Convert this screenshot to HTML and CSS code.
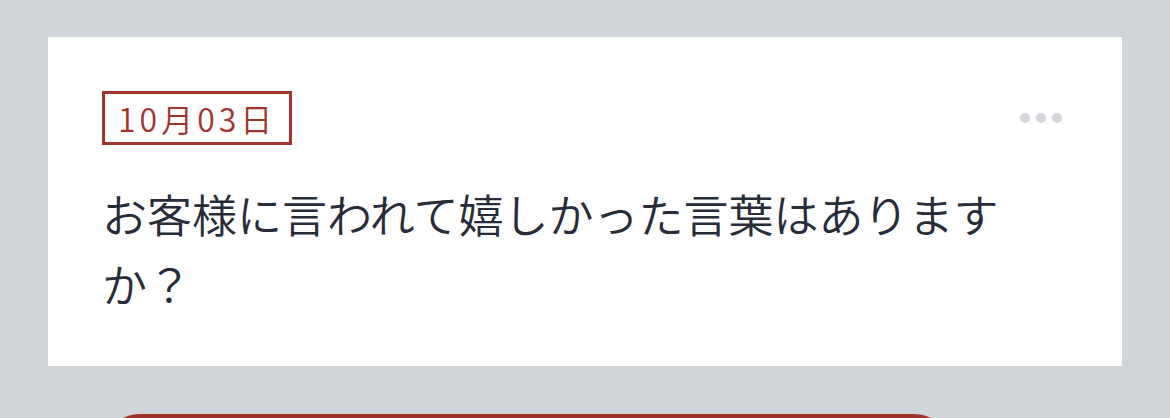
FILE: index.html
```html
<!DOCTYPE html>
<html lang="ja">
<head>
    <meta charset="UTF-8">
    <meta name="viewport" content="width=device-width, initial-scale=1.0">
    <title>質問カード</title>
    <link rel="stylesheet" href="styles.css">
</head>
<body>
    <div class="card">
        <div class="card-head">
            <span class="date-badge">10月03日</span>
            <button class="more" aria-label="メニュー">
                <span class="dot"></span>
                <span class="dot"></span>
                <span class="dot"></span>
            </button>
        </div>
        <p class="question">お客様に言われて嬉しかった言葉はありますか？</p>
    </div>

    <div class="actions">
        <button class="answer-btn" aria-label="回答する"></button>
    </div>
</body>
</html>
```

FILE: styles.css
```css
body {
    font-family: "Noto Sans CJK JP", "Noto Sans", sans-serif;
    background-color: #d1d4d9;
    margin: 0;
    padding: 37px 48px 0;
    color: #272c38;
}
.card {
    background: white;
    padding: 54px 54px 47px;
}
.card-head {
    display: flex;
    align-items: center;
    justify-content: space-between;
}
.date-badge {
    display: inline-block;
    border: 3px solid #a2342c;
    color: #a2342c;
    font-size: 32px;
    font-weight: 350;
    letter-spacing: 4px;
    line-height: 42px;
    padding: 3px 13px 3px 13px;
}
.more {
    display: flex;
    gap: 6px;
    background: none;
    border: 0;
    padding: 0;
    margin-right: 6px;
}
.dot {
    width: 10px;
    height: 10px;
    border-radius: 50%;
    background: #d3d5da;
}
.question {
    font-size: 45px;
    font-weight: 350;
    line-height: 70px;
    margin: 34px 0 0;
    max-width: 920px;
}
.actions {
    padding: 48px 0 0 48px;
}
.answer-btn {
    display: block;
    width: 862px;
    height: 90px;
    border: 0;
    border-radius: 45px;
    background: #9d3329;
}
```
